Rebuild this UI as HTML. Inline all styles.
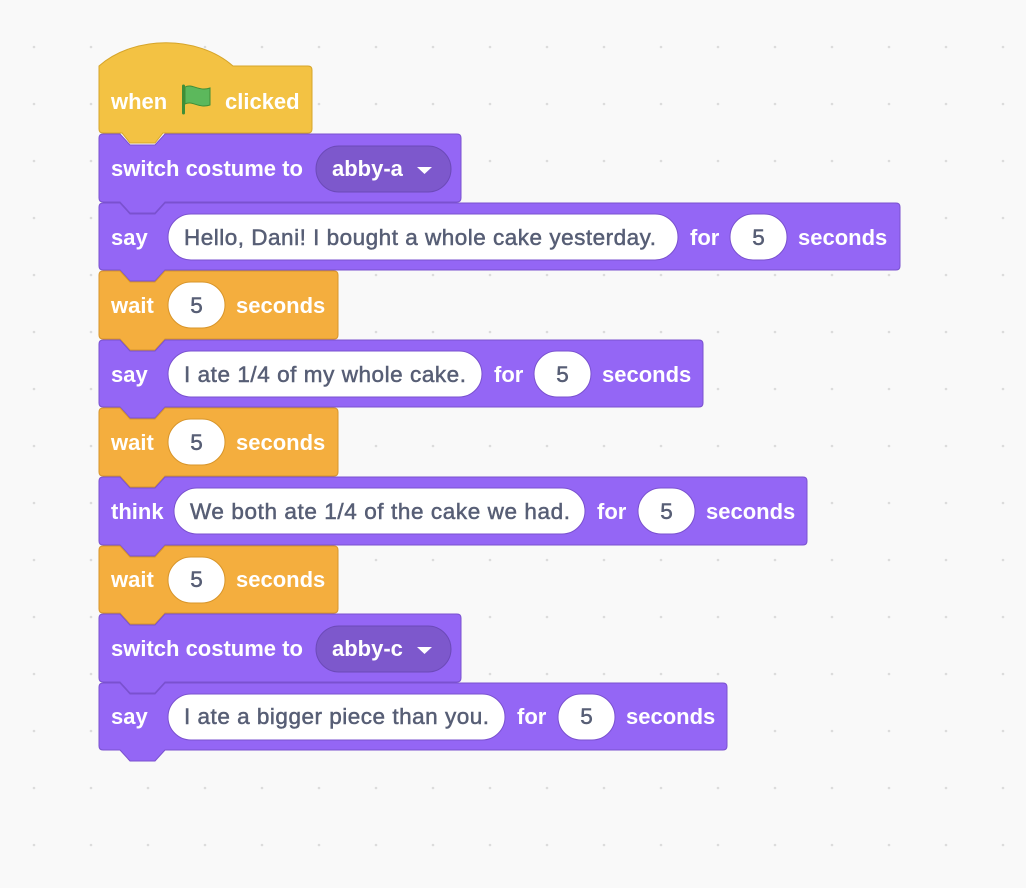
<!DOCTYPE html>
<html><head><meta charset="utf-8"><style>
html,body{margin:0;padding:0;background:#f9f9f9;}
svg{display:block}
.w{font-family:"Liberation Sans",Arial,sans-serif;font-weight:bold;font-size:22px;fill:#fff}
.i{font-family:"Liberation Sans",Arial,sans-serif;font-size:22.5px;fill:#575e75;stroke:#575e75;stroke-width:0.5}
</style></head><body>
<svg width="1026" height="888" viewBox="0 0 1026 888" xmlns="http://www.w3.org/2000/svg">
<defs>
<pattern id="g" x="0" y="0" width="57" height="57" patternUnits="userSpaceOnUse">
<circle cx="34" cy="47" r="1.3" fill="#dcdcdc"/>
</pattern>
</defs>
<rect width="1026" height="888" fill="#f9f9f9"/>
<rect width="1026" height="888" fill="url(#g)"/>

<path d="M99,66 C134,35 198,35 233,66 H308 Q312,66 312,70 V129 Q312,133 308,133 H163 L155,143 H130 L122,133 H103 Q99,133 99,129 Z" fill="#f3c243" stroke="#d6a52a" stroke-width="1"/>
<text class="w" x="111" y="109">when</text>
<path d="M183.5,86 V113" stroke="#3f8e37" stroke-width="3" stroke-linecap="round"/>
<path d="M185,87 C192,83 199,92 210,88 V105 C199,109 192,100 185,104 Z" fill="#5cb85c" stroke="#3f8e37" stroke-width="1"/>
<text class="w" x="225" y="109">clicked</text>

<g stroke-width="1">
<path d="M99,138 Q99,134 103,134 H120 L130,145 H155 L165,134 H457 Q461,134 461,138 V198 Q461,202 457,202 H165 L155,213 H130 L120,202 H103 Q99,202 99,198 Z" fill="#9466f5" stroke="#7a51cf"/>
<path d="M99,207 Q99,203 103,203 H120 L130,214 H155 L165,203 H896 Q900,203 900,207 V266 Q900,270 896,270 H165 L155,281 H130 L120,270 H103 Q99,270 99,266 Z" fill="#9466f5" stroke="#7a51cf"/>
<path d="M99,275 Q99,271 103,271 H120 L130,282 H155 L165,271 H334 Q338,271 338,275 V335 Q338,339 334,339 H165 L155,350 H130 L120,339 H103 Q99,339 99,335 Z" fill="#f4ae3e" stroke="#d8952a"/>
<path d="M99,344 Q99,340 103,340 H120 L130,351 H155 L165,340 H699 Q703,340 703,344 V403 Q703,407 699,407 H165 L155,418 H130 L120,407 H103 Q99,407 99,403 Z" fill="#9466f5" stroke="#7a51cf"/>
<path d="M99,412 Q99,408 103,408 H120 L130,419 H155 L165,408 H334 Q338,408 338,412 V472 Q338,476 334,476 H165 L155,487 H130 L120,476 H103 Q99,476 99,472 Z" fill="#f4ae3e" stroke="#d8952a"/>
<path d="M99,481 Q99,477 103,477 H120 L130,488 H155 L165,477 H803 Q807,477 807,481 V541 Q807,545 803,545 H165 L155,556 H130 L120,545 H103 Q99,545 99,541 Z" fill="#9466f5" stroke="#7a51cf"/>
<path d="M99,550 Q99,546 103,546 H120 L130,557 H155 L165,546 H334 Q338,546 338,550 V609 Q338,613 334,613 H165 L155,624 H130 L120,613 H103 Q99,613 99,609 Z" fill="#f4ae3e" stroke="#d8952a"/>
<path d="M99,618 Q99,614 103,614 H120 L130,625 H155 L165,614 H457 Q461,614 461,618 V678 Q461,682 457,682 H165 L155,693 H130 L120,682 H103 Q99,682 99,678 Z" fill="#9466f5" stroke="#7a51cf"/>
<path d="M99,687 Q99,683 103,683 H120 L130,694 H155 L165,683 H723 Q727,683 727,687 V746 Q727,750 723,750 H165 L155,761 H130 L120,750 H103 Q99,750 99,746 Z" fill="#9466f5" stroke="#7a51cf"/>
</g>

<text class="w" x="111" y="176">switch costume to</text>
<rect x="316" y="146" width="135" height="46" rx="23" fill="#7d58cc" stroke="#6c4ab8"/>
<text class="w" x="332" y="176">abby-a</text>
<path d="M417,167 H432 L424.5,174 Z" fill="#fff"/>

<text class="w" x="111" y="245">say</text>
<rect x="168" y="214" width="510" height="46" rx="23" fill="#fff" stroke="#7a51cf"/>
<text class="i" x="184" y="245" textLength="472">Hello, Dani! I bought a whole cake yesterday.</text>
<text class="w" x="690" y="245">for</text>
<rect x="730" y="214" width="57" height="46" rx="23" fill="#fff" stroke="#7a51cf"/>
<text class="i" x="758.5" y="245" text-anchor="middle">5</text>
<text class="w" x="798" y="245">seconds</text>

<text class="w" x="111" y="313">wait</text>
<rect x="168" y="282" width="57" height="46" rx="23" fill="#fff" stroke="#d8952a"/>
<text class="i" x="196.5" y="313" text-anchor="middle">5</text>
<text class="w" x="236" y="313">seconds</text>

<text class="w" x="111" y="382">say</text>
<rect x="168" y="351" width="314" height="46" rx="23" fill="#fff" stroke="#7a51cf"/>
<text class="i" x="184" y="382" textLength="282">I ate 1/4 of my whole cake.</text>
<text class="w" x="494" y="382">for</text>
<rect x="534" y="351" width="57" height="46" rx="23" fill="#fff" stroke="#7a51cf"/>
<text class="i" x="562.5" y="382" text-anchor="middle">5</text>
<text class="w" x="602" y="382">seconds</text>

<text class="w" x="111" y="450">wait</text>
<rect x="168" y="419" width="57" height="46" rx="23" fill="#fff" stroke="#d8952a"/>
<text class="i" x="196.5" y="450" text-anchor="middle">5</text>
<text class="w" x="236" y="450">seconds</text>

<text class="w" x="111" y="519">think</text>
<rect x="174" y="488" width="411" height="46" rx="23" fill="#fff" stroke="#7a51cf"/>
<text class="i" x="190" y="519" textLength="380">We both ate 1/4 of the cake we had.</text>
<text class="w" x="597" y="519">for</text>
<rect x="638" y="488" width="57" height="46" rx="23" fill="#fff" stroke="#7a51cf"/>
<text class="i" x="666.5" y="519" text-anchor="middle">5</text>
<text class="w" x="706" y="519">seconds</text>

<text class="w" x="111" y="587">wait</text>
<rect x="168" y="557" width="57" height="46" rx="23" fill="#fff" stroke="#d8952a"/>
<text class="i" x="196.5" y="587" text-anchor="middle">5</text>
<text class="w" x="236" y="587">seconds</text>

<text class="w" x="111" y="656">switch costume to</text>
<rect x="316" y="626" width="135" height="46" rx="23" fill="#7d58cc" stroke="#6c4ab8"/>
<text class="w" x="332" y="656">abby-c</text>
<path d="M417,647 H432 L424.5,654 Z" fill="#fff"/>

<text class="w" x="111" y="724">say</text>
<rect x="168" y="694" width="337" height="46" rx="23" fill="#fff" stroke="#7a51cf"/>
<text class="i" x="184" y="724" textLength="305">I ate a bigger piece than you.</text>
<text class="w" x="517" y="724">for</text>
<rect x="558" y="694" width="57" height="46" rx="23" fill="#fff" stroke="#7a51cf"/>
<text class="i" x="586.5" y="724" text-anchor="middle">5</text>
<text class="w" x="626" y="724">seconds</text>
</svg>
</body></html>
